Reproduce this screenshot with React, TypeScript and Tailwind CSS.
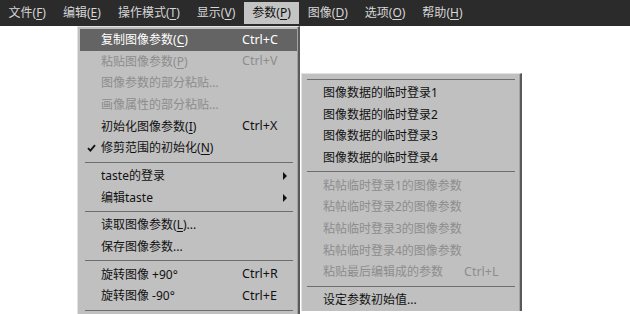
import React from 'react';

type Item =
  | { sep: true }
  | {
      sep?: false;
      label: React.ReactNode;
      shortcut?: string;
      disabled?: boolean;
      active?: boolean;
      checked?: boolean;
      arrow?: boolean;
    };

const Key: React.FC<{ k: string }> = ({ k }) => (
  <>
    (<span className="underline underline-offset-[2px]">{k}</span>)
  </>
);

const menuBar: { label: string; key: string; open?: boolean }[] = [
  { label: '文件', key: 'F' },
  { label: '编辑', key: 'E' },
  { label: '操作模式', key: 'T' },
  { label: '显示', key: 'V' },
  { label: '参数', key: 'P', open: true },
  { label: '图像', key: 'D' },
  { label: '选项', key: 'O' },
  { label: '帮助', key: 'H' },
];

const paramsMenu: Item[] = [
  { label: <>复制图像参数<Key k="C" /></>, shortcut: 'Ctrl+C', active: true },
  { label: <>粘贴图像参数<Key k="P" /></>, shortcut: 'Ctrl+V', disabled: true },
  { label: '图像参数的部分粘贴...', disabled: true },
  { label: '画像属性的部分粘贴...', disabled: true },
  { label: <>初始化图像参数<Key k="I" /></>, shortcut: 'Ctrl+X' },
  { label: <>修剪范围的初始化<Key k="N" /></>, checked: true },
  { sep: true },
  { label: 'taste的登录', arrow: true },
  { label: '编辑taste', arrow: true },
  { sep: true },
  { label: <>读取图像参数<Key k="L" />...</> },
  { label: '保存图像参数...' },
  { sep: true },
  { label: '旋转图像 +90°', shortcut: 'Ctrl+R' },
  { label: '旋转图像 -90°', shortcut: 'Ctrl+E' },
  { sep: true },
  { label: '' },
];

const tasteMenu: Item[] = [
  { sep: true },
  { label: '图像数据的临时登录1' },
  { label: '图像数据的临时登录2' },
  { label: '图像数据的临时登录3' },
  { label: '图像数据的临时登录4' },
  { sep: true },
  { label: '粘帖临时登录1的图像参数', disabled: true },
  { label: '粘帖临时登录2的图像参数', disabled: true },
  { label: '粘帖临时登录3的图像参数', disabled: true },
  { label: '粘帖临时登录4的图像参数', disabled: true },
  { label: '粘贴最后编辑成的参数', shortcut: 'Ctrl+L', disabled: true },
  { sep: true },
  { label: '设定参数初始值...' },
];

const Row: React.FC<{ item: Item }> = ({ item }) => {
  if (item.sep) {
    return (
      <div className="flex h-[6px] items-center pl-[5px] pr-[4px]">
        <div className="h-px w-full bg-[#6e6e6e]" />
      </div>
    );
  }
  const tone = item.active
    ? 'bg-[#646464] text-white'
    : item.disabled
      ? 'text-[#8d8d8d]'
      : 'text-[#111111]';
  return (
    <div className={`relative flex h-[21.7px] items-center pl-[21px] ${tone}`}>
      {item.checked && (
        <svg className="absolute left-[7px] top-[7px]" width="9" height="8" viewBox="0 0 9 8">
          <path d="M1 4.2 L3.4 6.6 L8 1.2" fill="none" stroke="#111" strokeWidth="1.8" />
        </svg>
      )}
      <span className="w-[141px] shrink-0 whitespace-nowrap">{item.label}</span>
      {item.shortcut && <span className="whitespace-nowrap text-[12.5px]">{item.shortcut}</span>}
      {item.arrow && (
        <svg className="absolute left-[203px] top-[7px]" width="4" height="8" viewBox="0 0 4 8">
          <path d="M0 0 L4 4 L0 8 Z" fill="#111" />
        </svg>
      )}
    </div>
  );
};

const Menu: React.FC<{ items: Item[]; className: string }> = ({ items, className }) => (
  <div
    className={`absolute border-l border-t border-[#e2e2e2] border-r-2 border-r-[#5a5a5a] bg-[#c0c0c0] ${className}`}
  >
    <div className="w-[218px] border-r border-[#a2a2a2] pt-[2px]">
      {items.map((item, i) => (
        <Row key={i} item={item} />
      ))}
    </div>
  </div>
);

const App: React.FC = () => {
  return (
    <div className="relative h-[314px] w-[630px] overflow-hidden bg-white text-[12px] font-['Noto_Sans','Noto_Sans_CJK_SC',sans-serif] leading-none">
      <div className="flex h-[26px] items-center bg-[#2b2b2b]">
        {menuBar.map((m) => (
          <div
            key={m.key}
            className={`flex h-[22px] items-center px-[8.5px] whitespace-nowrap ${
              m.open ? 'bg-[#c4c4c4] text-[#111111]' : 'text-[#d6d6d6]'
            }`}
          >
            {m.label}
            <Key k={m.key} />
          </div>
        ))}
      </div>

      <Menu items={paramsMenu} className="left-[77px] top-[26px] pl-[2px]" />
      <Menu items={tasteMenu} className="left-[301px] top-[73px]" />
    </div>
  );
};

export default App;
